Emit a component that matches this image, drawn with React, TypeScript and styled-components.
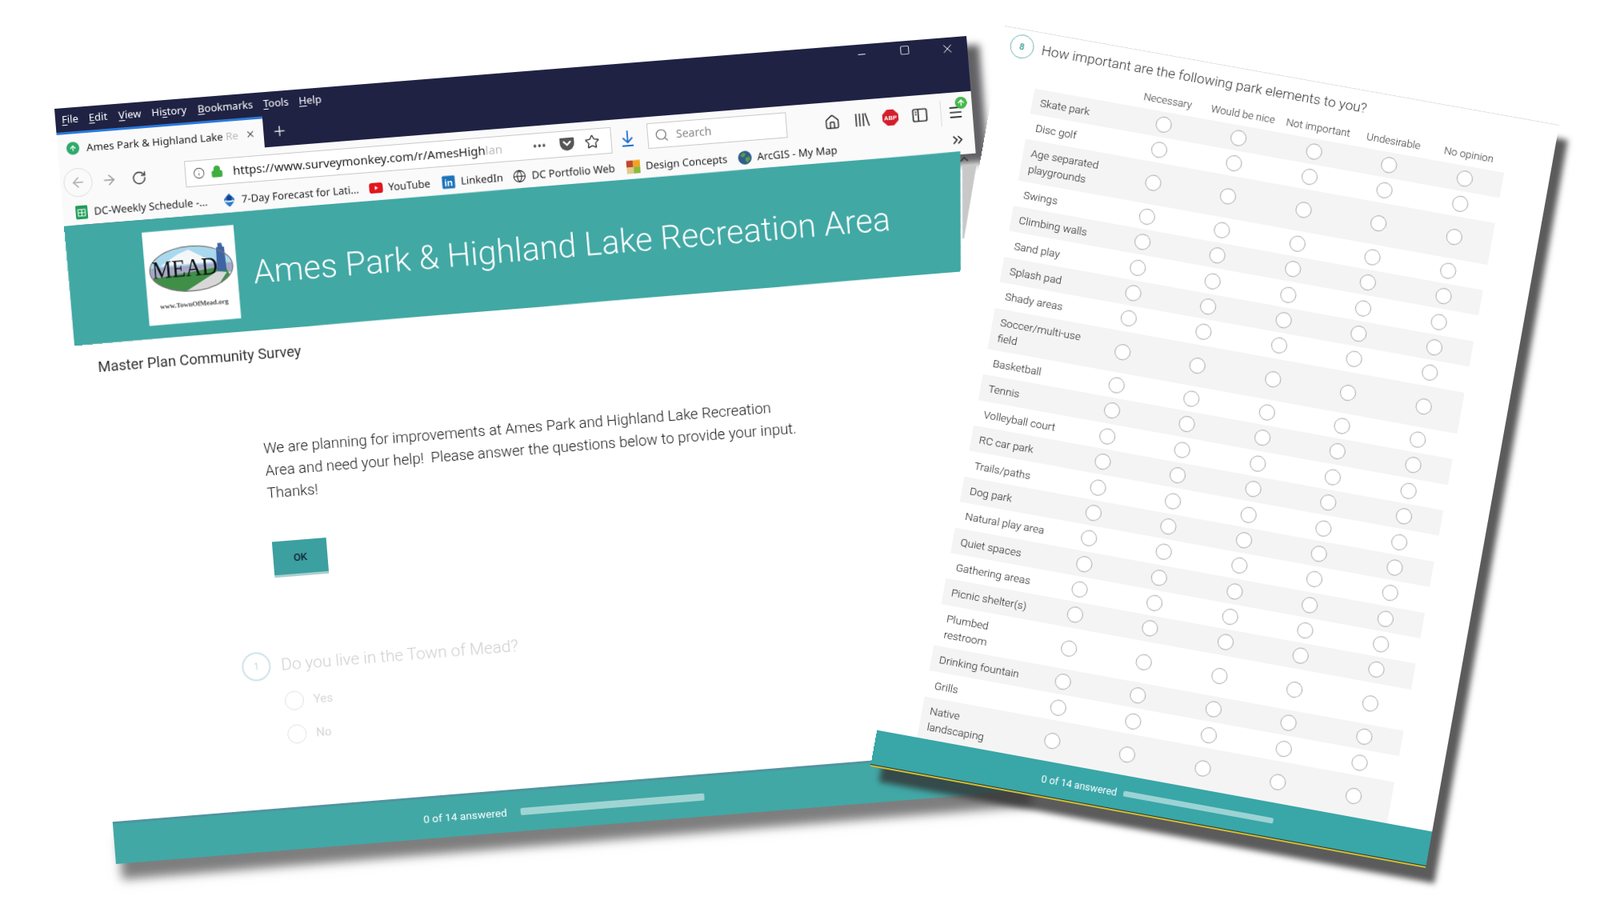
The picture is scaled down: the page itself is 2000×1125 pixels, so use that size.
import React from "react";
import styled, { createGlobalStyle } from "styled-components";
import { ArrowLeft, ArrowRight, RotateCw, Info, Lock, Star, Search, Home, Menu, ChevronsRight, Globe, X, Plus, ArrowUp, ChevronUp, Minus, Square } from "lucide-react";

type Pt = [number, number];
function warp(w: number, h: number, q: [Pt, Pt, Pt, Pt]): string {
  const [[x0, y0], [x1, y1], [x2, y2], [x3, y3]] = q;
  const dx1 = x1 - x2, dx2 = x3 - x2, dx3 = x0 - x1 + x2 - x3;
  const dy1 = y1 - y2, dy2 = y3 - y2, dy3 = y0 - y1 + y2 - y3;
  const det = dx1 * dy2 - dx2 * dy1;
  const g = (dx3 * dy2 - dx2 * dy3) / det;
  const k = (dx1 * dy3 - dx3 * dy1) / det;
  const a = x1 - x0 + g * x1, b = x3 - x0 + k * x3;
  const d = y1 - y0 + g * y1, e = y3 - y0 + k * y3;
  return `matrix3d(${a / w},${d / w},0,${g / w},${b / h},${e / h},0,${k / h},0,0,1,0,${x0},${y0},0,1)`;
}

const LEFT_W = 1144, LEFT_H = 947, RIGHT_W = 704, RIGHT_H = 941;
const leftWarp = warp(LEFT_W, LEFT_H, [[68, 136], [1208, 45], [1283, 988], [145, 1080]]);
const rightWarp = warp(RIGHT_W, RIGHT_H, [[1256, 32], [1949, 156], [1782, 1085], [1088, 958]]);

const Global = createGlobalStyle`
  html, body { margin: 0; padding: 0; background: #fff; }
  body { width: 2000px; height: 1125px; overflow: hidden; font-family: Roboto, "Liberation Sans", sans-serif; }
`;

const Stage = styled.div`
  position: relative;
  width: 2000px;
  height: 1125px;
  background: #fff;
  overflow: hidden;
`;

const BrowserSheet = styled.section`
  position: absolute;
  left: 0;
  top: 0;
  width: ${LEFT_W}px;
  height: ${LEFT_H}px;
  transform-origin: 0 0;
  transform: ${leftWarp};
  display: flex;
  flex-direction: column;
`;

const Chrome = styled.div`
  flex: none;
  height: 147px;
  background: #fafafb;
  box-shadow: 15px 12px 9px rgba(45, 45, 50, 0.75);
  display: flex;
  flex-direction: column;
  font-family: "Noto Sans", sans-serif;
  color: #222;
`;

const Navy = styled.div`
  flex: none;
  height: 69px;
  background: #1f2243;
  color: #fff;
`;

const TitleRow = styled.div`
  height: 27px;
  display: flex;
  align-items: center;
  padding-left: 8px;
`;

const MenuItem = styled.span<{ $gap: number }>`
  font-size: 13px;
  margin-right: ${(p) => p.$gap}px;
  u { text-underline-offset: 2px; }
`;

const Controls = styled.div`
  margin-left: auto;
  margin-right: -2px;
  display: flex;
`;

const Control = styled.span`
  width: 54px;
  display: flex;
  justify-content: center;
  color: #f2f2f8;
`;

const TabRow = styled.div`
  margin-top: 3px;
  height: 39px;
  display: flex;
  align-items: stretch;
`;

const Tab = styled.div`
  width: 258px;
  background: #fafafb;
  border-top: 3px solid #2b79d8;
  display: flex;
  align-items: center;
  padding: 0 10px 0 11px;
  gap: 9px;
  box-sizing: border-box;
  font-size: 13.2px;
  color: #222;
  white-space: nowrap;
`;

const Favicon = styled.span`
  width: 16px;
  height: 16px;
  border-radius: 50%;
  background: #2fa96b;
  display: flex;
  align-items: center;
  justify-content: center;
  flex: none;
`;

const TabTitle = styled.span`
  flex: 1;
`;

const Faded = styled.span`
  color: #bbb;
`;

const NewTab = styled.span`
  margin-left: 10px;
  display: flex;
  align-items: center;
  color: #fff;
`;

const Toolbar = styled.div`
  position: relative;
  flex: none;
  height: 46px;
  box-sizing: border-box;
  display: flex;
  align-items: center;
  padding: 4px 0 0 4px;
  color: #4a4a4f;
`;

const BackCircle = styled.span`
  width: 36px;
  height: 36px;
  border-radius: 50%;
  border: 1px solid #ddd;
  box-sizing: border-box;
  display: flex;
  align-items: center;
  justify-content: center;
  color: #aaa;
  flex: none;
`;

const Tool = styled.span<{ $ml: number; $color?: string }>`
  width: 20px;
  height: 20px;
  flex: none;
  margin-left: ${(p) => p.$ml}px;
  color: ${(p) => p.$color ?? "inherit"};
  display: flex;
  align-items: center;
  justify-content: center;
`;

const UrlBar = styled.div`
  flex: none;
  width: 535px;
  height: 33px;
  margin-left: 48px;
  background: #fff;
  border: 1px solid #c9c9c9;
  box-sizing: border-box;
  display: flex;
  align-items: center;
  padding-left: 9px;
  font-size: 15px;
  color: #222;
  white-space: nowrap;
`;

const UrlText = styled.span`
  width: 343px;
  margin-left: 12px;
`;

const UrlAction = styled.span<{ $ml: number }>`
  margin-left: ${(p) => p.$ml}px;
  display: flex;
  align-items: center;
  color: #555;
`;

const SearchBox = styled.div`
  flex: none;
  width: 175px;
  height: 32px;
  margin-left: 15px;
  margin-top: -2.4px;
  background: #fff;
  border: 1px solid #c9c9c9;
  box-sizing: border-box;
  display: flex;
  align-items: center;
  gap: 9px;
  padding-left: 8px;
  font-size: 14px;
  color: #888;
`;

const ToolDivider = styled.span`
  width: 1px;
  height: 32px;
  margin-left: 16px;
  background: #dcdcdc;
  flex: none;
`;

const Badge = styled.span`
  position: absolute;
  left: 1123px;
  top: 6px;
  width: 15px;
  height: 15px;
  border-radius: 50%;
  background: #45b84a;
  display: flex;
  align-items: center;
  justify-content: center;
  color: #fff;
`;

const BookmarkRow = styled.div`
  flex: none;
  height: 32px;
  display: grid;
  grid-template-columns: 185px 184px 91px 89px 143px 140px 266px 20px;
  align-items: center;
  padding-left: 15px;
  transform-origin: 0 50%;
  transform: rotate(-0.13deg);
`;

const Bookmark = styled.span`
  display: flex;
  align-items: center;
  gap: 7px;
  font-size: 13px;
  color: #222;
  white-space: nowrap;
`;

const Mark = styled.svg`
  width: 17px;
  height: 17px;
  flex: none;
`;

const Banner = styled.header`
  flex: none;
  height: 150px;
  background: #41a8a4;
  display: flex;
  align-items: flex-start;
  padding: 16px 0 0 96px;
  box-sizing: border-box;
  clip-path: polygon(0 0, 1125px 0, 1113px 100%, 0 100%);
  transform-origin: 0 0;
  transform: rotate(-0.2deg);
`;

const LogoCard = styled.div`
  width: 115px;
  height: 117px;
  flex: none;
  background: #fff;
`;

const Title = styled.h1`
  margin: 36px 0 0 20px;
  font-family: Roboto, sans-serif;
  font-weight: 300;
  font-size: 41.5px;
  line-height: 50px;
  color: #fff;
  white-space: nowrap;
`;

const ScrollWedge = styled.div`
  position: absolute;
  left: 1119px;
  top: 147px;
  width: 25px;
  height: 105px;
  background: #c8c8c8;
  clip-path: polygon(7px 14px, 25px 14px, 2px 100%, 0 100%);
`;

const ScrollArrow = styled.span`
  position: absolute;
  left: 1121px;
  top: 145px;
  color: #444;
  display: flex;
`;

const PageBody = styled.main`
  flex: 1;
  background: #fff;
  display: flex;
  flex-direction: column;
  font-family: Roboto, sans-serif;
  color: #333;
`;

const SurveyName = styled.div`
  margin: 17px 0 0 28px;
  font-size: 18.3px;
  line-height: 24px;
  font-weight: 400;
`;

const Intro = styled.p`
  margin: 92px 0 0 226px;
  width: 700px;
  font-size: 18.5px;
  line-height: 28px;
  font-weight: 300;
  white-space: pre-wrap;
  color: #1c1c1c;
`;

const OkButton = styled.button`
  display: block;
  width: 68px;
  height: 45px;
  margin: 47px 0 0 227px;
  border: 0;
  border-bottom: 3px solid #a9cfcf;
  background: #3c9fa0;
  color: #123;
  font: 500 13px Roboto, sans-serif;
  padding: 0;
`;

const QuestionRow = styled.div`
  display: flex;
  align-items: center;
  gap: 13px;
  height: 40px;
  margin: 89px 0 0 177px;
`;

const QuestionBadge = styled.span`
  width: 36px;
  height: 36px;
  flex: none;
  box-sizing: border-box;
  border: 2.5px solid #cfe3e8;
  border-radius: 50%;
  display: flex;
  align-items: center;
  justify-content: center;
  font-size: 12px;
  color: #c9d8dc;
`;

const QuestionText = styled.span`
  font-size: 20.8px;
  font-weight: 300;
  color: #cfcfcf;
`;

const Option = styled.div`
  display: flex;
  align-items: center;
  gap: 12px;
  height: 42px;
  margin-left: 227px;
  font-size: 15px;
  color: #d6d6d6;
`;

const OptionGap = styled.div`
  height: 5px;
`;

const OptionRadio = styled.span`
  width: 24px;
  height: 24px;
  box-sizing: border-box;
  border: 1.5px solid #e2e2e2;
  border-radius: 50%;
  flex: none;
`;

const Footer = styled.footer<{ $h: number; $pad: number }>`
  flex: none;
  height: ${(p) => p.$h}px;
  box-sizing: border-box;
  background: #41a8a6;
  display: flex;
  align-items: center;
  padding-left: ${(p) => p.$pad}px;
  font-family: Roboto, sans-serif;
  color: #fff;
`;

const LeftFooter = styled(Footer)`
  border-top: 3px solid #4f95a0;
  box-shadow: 6px 20px 12px rgba(40, 40, 40, 0.6);
`;

const RightFooter = styled(Footer)`
  background: #39a6a8;
  border-bottom: 2px solid #cdbf35;
  box-shadow: inset 0 -1px 0 #333;
`;

const FooterCount = styled.span<{ $w: number; $size: number }>`
  width: ${(p) => p.$w}px;
  font-size: ${(p) => p.$size}px;
  white-space: nowrap;
`;

const Progress = styled.span<{ $w: number; $h: number }>`
  width: ${(p) => p.$w}px;
  height: ${(p) => p.$h}px;
  background: rgba(255, 255, 255, 0.5);
  border-radius: 2px;
`;

const SurveySheet = styled.section`
  position: absolute;
  left: 0;
  top: 0;
  width: ${RIGHT_W}px;
  height: ${RIGHT_H}px;
  transform-origin: 0 0;
  transform: ${rightWarp};
  background: #fff;
  border-top: 1px solid #e4e4e4;
  box-sizing: border-box;
  box-shadow: 14px 17px 7px rgba(50, 50, 50, 0.8);
  display: flex;
  flex-direction: column;
  font-family: Roboto, sans-serif;
  color: #444;
`;

const SheetMain = styled.div`
  flex: 1;
`;

const SheetHeading = styled.div`
  display: flex;
  align-items: center;
  gap: 10px;
  height: 30px;
  margin: 6px 0 1px 11px;
`;

const SheetBadge = styled.span`
  width: 30px;
  height: 30px;
  flex: none;
  box-sizing: border-box;
  border: 1.5px solid #6db5ad;
  border-radius: 50%;
  display: flex;
  align-items: center;
  justify-content: center;
  font-size: 11px;
  font-weight: 700;
  color: #48a89c;
`;

const SheetTitle = styled.span`
  font-size: 17.3px;
  font-weight: 300;
  color: #333;
  white-space: nowrap;
`;

const ColumnRow = styled.div`
  display: grid;
  grid-template-columns: 119px repeat(5, 95.5px);
  height: 32.5px;
  box-sizing: border-box;
  padding-top: 5px;
  margin-left: 51px;
  align-items: center;
  font-size: 13.2px;
  font-weight: 300;
  text-align: center;
  color: #333;
`;

const MatrixRow = styled.div<{ $shaded: boolean }>`
  display: grid;
  grid-template-columns: 119px repeat(5, 95.5px);
  align-items: center;
  margin-left: 51px;
  width: 596px;
  padding: 6.2px 0;
  background: ${(p) => (p.$shaded ? "#f5f4f4" : "transparent")};
`;

const RowLabel = styled.span`
  padding-left: 10px;
  font-size: 13.6px;
  line-height: 20px;
  font-weight: 300;
  color: #222;
`;

const Cell = styled.span`
  display: flex;
  justify-content: center;
`;

const MatrixRadio = styled.span`
  width: 20px;
  height: 20px;
  box-sizing: border-box;
  border: 1.5px solid #a9a9a9;
  border-radius: 50%;
  background: #fff;
`;

const LogoArt = () => (
  <svg width="115" height="117" viewBox="0 0 115 117">
    <defs>
      <clipPath id="oval"><ellipse cx="58" cy="50" rx="52" ry="28" /></clipPath>
    </defs>
    <g clipPath="url(#oval)">
      <rect x="0" y="20" width="115" height="30" fill="#a9d9ee" />
      <path d="M20 44 L42 31 L56 26 L68 33 L86 44 Z" fill="#f4f7f8" />
      <rect x="0" y="46" width="115" height="12" fill="#a4a8c4" />
      <path d="M0 60 L100 50 L115 80 L0 80 Z" fill="#3f8f48" />
      <path d="M45 80 L90 56 L102 58 L85 80 Z" fill="#d8d8d8" />
    </g>
    <path d="M93 21h5l1 5h2l1 30H90l1-30h2z" fill="#3f64a3" />
    <ellipse cx="58" cy="50" rx="52" ry="28" fill="none" stroke="#777" strokeWidth="1.2" />
    <text x="50" y="59" textAnchor="middle" fontFamily="'Liberation Serif', serif" fontSize="31" fill="#111" textLength="82" lengthAdjust="spacingAndGlyphs">MEAD</text>
    <text x="58" y="97" textAnchor="middle" fontFamily="'Liberation Serif', serif" fontWeight="700" fontSize="8.6" fill="#444">www.TownOfMead.org</text>
  </svg>
);

const Pocket = () => (
  <svg width="20" height="20" viewBox="0 0 20 20">
    <path d="M2 3h16a1 1 0 0 1 1 1v6a9 9 0 0 1-18 0V4a1 1 0 0 1 1-1z" fill="#555" />
    <path d="M6 8l4 4 4-4" fill="none" stroke="#fff" strokeWidth="2.2" strokeLinecap="round" />
  </svg>
);

const DownloadArrow = () => (
  <svg width="20" height="22" viewBox="0 0 20 22" fill="none" stroke="#1f6fd0" strokeWidth="1.8">
    <path d="M10 1v14M4 10l6 6 6-6M3 20h14" />
  </svg>
);

const LibraryIcon = () => (
  <svg width="20" height="20" viewBox="0 0 20 20" fill="none" stroke="#333" strokeWidth="1.6">
    <path d="M3 2v16M7.5 2v16M12 2v16M14.5 2l4.5 16" />
  </svg>
);

const AbpIcon = () => (
  <svg width="20" height="20" viewBox="0 0 20 20">
    <path d="M6 0h8l6 6v8l-6 6H6l-6-6V6z" fill="#d2202a" />
    <text x="10" y="13" textAnchor="middle" fontFamily="'Liberation Sans', sans-serif" fontWeight="700" fontSize="7.5" fill="#fff">ABP</text>
  </svg>
);

const SidebarIcon = () => (
  <svg width="20" height="20" viewBox="0 0 20 20" fill="none" stroke="#333" strokeWidth="1.7">
    <rect x="1.5" y="2.5" width="17" height="15" rx="2" />
    <path d="M8 2.5v15" />
    <path d="M4 6h2M4 9h2" />
  </svg>
);

const SheetsMark = () => (
  <Mark viewBox="0 0 17 17">
    <rect x="1" y="0" width="15" height="17" rx="1.5" fill="#1f9d58" />
    <path d="M4 5h9v8H4zM4 9h9M8.5 5v8" fill="none" stroke="#fff" strokeWidth="1" />
  </Mark>
);

const NoaaMark = () => (
  <Mark viewBox="0 0 17 17">
    <path d="M8.5 17C4 13 2 10 2 7l6.500-7L15 7c0 3-2 6-6.500 10z" fill="#2a7bc8" />
    <circle cx="8.500" cy="6" r="3.200" fill="#1b3f8f" />
    <path d="M3 9c2 1.500 9 1.500 11 0" stroke="#fff" strokeWidth="1.600" fill="none" />
  </Mark>
);

const YoutubeMark = () => (
  <Mark viewBox="0 0 17 17">
    <rect x="0" y="2" width="17" height="13" rx="3.500" fill="#e1161c" />
    <path d="M7 6l4 2.500-4 2.500z" fill="#fff" />
  </Mark>
);

const LinkedinMark = () => (
  <Mark viewBox="0 0 17 17">
    <rect x="0.500" y="0.500" width="16" height="16" rx="1.500" fill="#1b74bb" />
    <text x="8.500" y="13.500" textAnchor="middle" fontFamily="'Liberation Sans', sans-serif" fontWeight="700" fontSize="12" fill="#fff">in</text>
  </Mark>
);

const ConceptsMark = () => (
  <Mark viewBox="0 0 17 17">
    <rect x="0" y="0" width="8.500" height="8.500" fill="#c0472c" />
    <rect x="8.500" y="0" width="8.500" height="8.500" fill="#f0a21f" />
    <rect x="0" y="8.500" width="8.500" height="8.500" fill="#e3c98a" />
    <rect x="8.500" y="8.500" width="8.500" height="8.500" fill="#8cb93c" />
  </Mark>
);

const ArcgisMark = () => (
  <Mark viewBox="0 0 17 17">
    <circle cx="8.500" cy="8.500" r="8.500" fill="#2d5f8c" />
    <path d="M3 5l4-3 3 2-2 3-3 1zM9 9l5-2 1 4-4 4-2-3z" fill="#5f9a46" />
  </Mark>
);

const elements: string[] = [
  "Skate park", "Disc golf", "Age separated playgrounds", "Swings", "Climbing walls", "Sand play",
  "Splash pad", "Shady areas", "Soccer/multi-use field", "Basketball", "Tennis", "Volleyball court",
  "RC car park", "Trails/paths", "Dog park", "Natural play area", "Quiet spaces", "Gathering areas",
  "Picnic shelter(s)", "Plumbed restroom", "Drinking fountain", "Grills", "Native landscaping",
];
const columns = ["Necessary", "Would be nice", "Not important", "Undesirable", "No opinion"];
const menus: [string, string, string, number][] = [
  ["", "F", "ile", 13], ["", "E", "dit", 14], ["", "V", "iew", 13], ["Hi", "s", "tory", 14],
  ["", "B", "ookmarks", 13], ["", "T", "ools", 13], ["", "H", "elp", 0],
];

export default function App() {
  return (
    <Stage>
      <Global />
      <BrowserSheet>
        <Chrome>
          <Navy>
            <TitleRow>
              {menus.map(([a, u, b, gap]) => (
                <MenuItem key={u} $gap={gap}>{a}<u>{u}</u>{b}</MenuItem>
              ))}
              <Controls>
                <Control><Minus size={15} strokeWidth={1.4} /></Control>
                <Control><Square size={13} strokeWidth={1.7} /></Control>
                <Control><X size={18} strokeWidth={1.1} /></Control>
              </Controls>
            </TitleRow>
            <TabRow>
              <Tab>
                <Favicon><ArrowUp size={10} color="#fff" strokeWidth={3} /></Favicon>
                <TabTitle>Ames Park &amp; Highland Lake <Faded>Re</Faded></TabTitle>
                <X size={18} strokeWidth={1.8} />
              </Tab>
              <NewTab><Plus size={20} strokeWidth={1.5} /></NewTab>
            </TabRow>
          </Navy>
          <Toolbar>
            <BackCircle><ArrowLeft size={20} strokeWidth={1.8} /></BackCircle>
            <Tool $ml={11} $color="#999"><ArrowRight size={20} strokeWidth={1.8} /></Tool>
            <Tool $ml={17}><RotateCw size={19} strokeWidth={2} /></Tool>
            <UrlBar>
              <Info size={15} strokeWidth={1.4} color="#555" />
              <Lock size={16} fill="#3fae3f" color="#3fae3f" style={{ marginLeft: 7 }} />
              <UrlText>https://www.surveymonkey.com/r/AmesHigh<Faded>lan</Faded></UrlText>
              <UrlAction $ml={33}>•••</UrlAction>
              <UrlAction $ml={16}><Pocket /></UrlAction>
              <UrlAction $ml={12}><Star size={19} strokeWidth={1.7} color="#333" /></UrlAction>
            </UrlBar>
            <Tool $ml={10}><DownloadArrow /></Tool>
            <SearchBox><Search size={18} strokeWidth={1.6} color="#777" />Search</SearchBox>
            <Tool $ml={47} $color="#333"><Home size={20} strokeWidth={1.8} /></Tool>
            <Tool $ml={17}><LibraryIcon /></Tool>
            <Tool $ml={16}><AbpIcon /></Tool>
            <Tool $ml={17}><SidebarIcon /></Tool>
            <ToolDivider />
            <Tool $ml={8} $color="#222"><Menu size={20} strokeWidth={2} /></Tool>
            <Badge><ArrowUp size={11} strokeWidth={3} /></Badge>
          </Toolbar>
          <BookmarkRow>
            <Bookmark><SheetsMark />DC-Weekly Schedule -...</Bookmark>
            <Bookmark><NoaaMark />7-Day Forecast for Lati...</Bookmark>
            <Bookmark><YoutubeMark />YouTube</Bookmark>
            <Bookmark><LinkedinMark />LinkedIn</Bookmark>
            <Bookmark><Globe size={17} strokeWidth={1.5} />DC Portfolio Web</Bookmark>
            <Bookmark><ConceptsMark />Design Concepts</Bookmark>
            <Bookmark><ArcgisMark />ArcGIS - My Map</Bookmark>
            <ChevronsRight size={20} strokeWidth={2} color="#333" />
          </BookmarkRow>
        </Chrome>
        <Banner>
          <LogoCard><LogoArt /></LogoCard>
          <Title>Ames Park &amp; Highland Lake Recreation Area</Title>
        </Banner>
        <ScrollWedge />
        <ScrollArrow><ChevronUp size={16} strokeWidth={3} /></ScrollArrow>
        <PageBody>
          <SurveyName>Master Plan Community Survey</SurveyName>
          <Intro>
            We are planning for improvements at Ames Park and Highland Lake Recreation
            <br />
            {"Area and need your help!  Please answer the questions below to provide your input."}
            <br />
            Thanks!
          </Intro>
          <OkButton>OK</OkButton>
          <QuestionRow>
            <QuestionBadge>1</QuestionBadge>
            <QuestionText>Do you live in the Town of Mead?</QuestionText>
          </QuestionRow>
          <OptionGap />
          <Option><OptionRadio />Yes</Option>
          <Option><OptionRadio />No</Option>
        </PageBody>
        <LeftFooter $h={53} $pad={388}>
          <FooterCount $w={122} $size={13.7}>0 of 14 answered</FooterCount>
          <Progress $w={231} $h={9} />
        </LeftFooter>
      </BrowserSheet>

      <SurveySheet>
        <SheetMain>
          <SheetHeading>
            <SheetBadge>8</SheetBadge>
            <SheetTitle>How important are the following park elements to you?</SheetTitle>
          </SheetHeading>
          <ColumnRow>
            <span />
            {columns.map((c) => <span key={c}>{c}</span>)}
          </ColumnRow>
          {elements.map((name, i) => (
            <MatrixRow key={name} $shaded={i % 2 === 0}>
              <RowLabel>{name}</RowLabel>
              {columns.map((c) => <Cell key={c}><MatrixRadio /></Cell>)}
            </MatrixRow>
          ))}
        </SheetMain>
        <RightFooter $h={46} $pad={213}>
          <FooterCount $w={104} $size={12.5}>0 of 14 answered</FooterCount>
          <Progress $w={190} $h={7} />
        </RightFooter>
      </SurveySheet>
    </Stage>
  );
}
